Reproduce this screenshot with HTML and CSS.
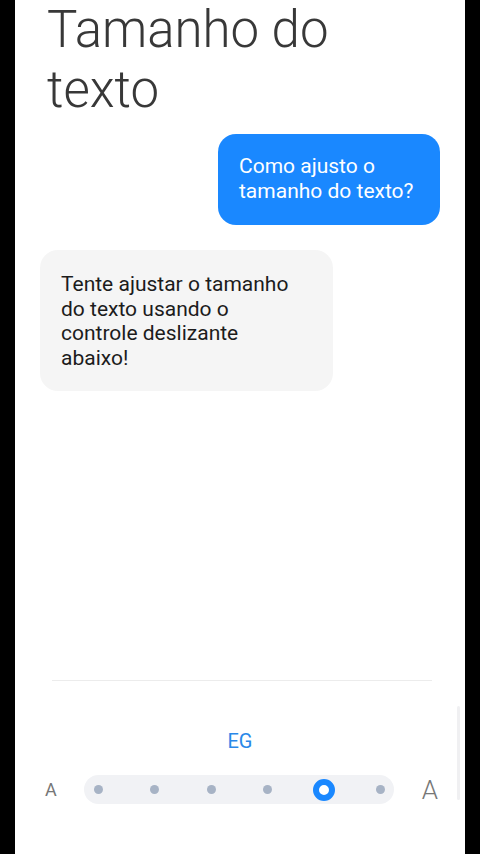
FILE: index.html
```html
<!DOCTYPE html>
<html lang="pt">
<head>
  <meta charset="UTF-8" />
  <meta name="viewport" content="width=device-width, initial-scale=1.0"/>
  <title>Tamanho do texto</title>
  <link rel="stylesheet" href="styles.css">
</head>
<body>

  <div class="screen">
    <h1 class="title">Tamanho do texto</h1>

    <div class="chat">
      <div class="bubble bubble-me">Como ajusto o tamanho do texto?</div>
      <div class="bubble bubble-bot">Tente ajustar o tamanho do texto usando o controle deslizante abaixo!</div>
    </div>

    <div class="size-panel">
      <div class="divider"></div>
      <div class="size-label">EG</div>

      <div class="size-row">
        <span class="a-small">A</span>
        <div class="track">
          <span class="step"><span class="dot"></span></span>
          <span class="step"><span class="dot"></span></span>
          <span class="step"><span class="dot"></span></span>
          <span class="step"><span class="dot"></span></span>
          <span class="step"><span class="dot active"></span></span>
          <span class="step"><span class="dot"></span></span>
        </div>
        <span class="a-big">A</span>
      </div>
    </div>

    <!-- barra de rolagem -->
    <div class="scrollbar"></div>
  </div>

</body>
</html>
```

FILE: styles.css
```css
body {
  margin: 0;
  background-color: #000;
  font-family: 'Roboto', 'Liberation Sans', sans-serif;
}

.screen {
  position: relative;
  width: 450px;
  height: 854px;
  margin-left: 15px;
  background-color: #fff;
  display: flex;
  flex-direction: column;
  overflow: hidden;
}

.title {
  margin: 0;
  padding-left: 32px;
  font-size: 51px;
  font-weight: 300;
  line-height: 60px;
  color: #383838;
  width: 320px;
}

.chat {
  display: flex;
  flex-direction: column;
  padding: 0 25px;
}

.bubble {
  box-sizing: border-box;
  font-size: 21px;
  border-radius: 18px;
}

.bubble-me {
  align-self: flex-end;
  max-width: 222px;
  margin-top: 14px;
  padding: 20px 21px 21px 21px;
  line-height: 25px;
  background-color: #1a88ff;
  color: #fff;
}

.bubble-bot {
  align-self: flex-start;
  width: 293px;
  margin-top: 25px;
  padding: 22px 32px 21px 21px;
  line-height: 24.5px;
  background-color: #f5f5f5;
  color: #1c1c1c;
}

.size-panel {
  margin-top: auto;
  padding-bottom: 50px;
}

.divider {
  height: 1px;
  margin: 0 33px 0 37px;
  background-color: #ececec;
}

.size-label {
  margin-top: 48px;
  text-align: center;
  font-size: 20px;
  line-height: 24px;
  color: #2a88e8;
}

.size-row {
  display: flex;
  align-items: center;
  justify-content: space-between;
  margin-top: 22px;
  padding: 0 27px 0 30px;
  height: 29px;
}

.a-small {
  font-size: 18px;
  color: #777;
}

.a-big {
  font-size: 26px;
  font-weight: 300;
  color: #777;
}

.track {
  width: 310px;
  height: 29px;
  box-sizing: border-box;
  padding: 0 3px;
  border-radius: 15px;
  background-color: #f1f2f5;
  display: flex;
  align-items: center;
  justify-content: space-between;
}

.step {
  width: 22px;
  display: flex;
  justify-content: center;
}

.dot {
  width: 9px;
  height: 9px;
  border-radius: 50%;
  background-color: #a7b3c5;
}

.dot.active {
  box-sizing: border-box;
  width: 22px;
  height: 22px;
  border: 6px solid #1a88ff;
  background-color: #fff;
}

.scrollbar {
  position: absolute;
  right: 5px;
  top: 706px;
  width: 3px;
  height: 94px;
  border-radius: 2px;
  background-color: #f0f0f2;
}
```
